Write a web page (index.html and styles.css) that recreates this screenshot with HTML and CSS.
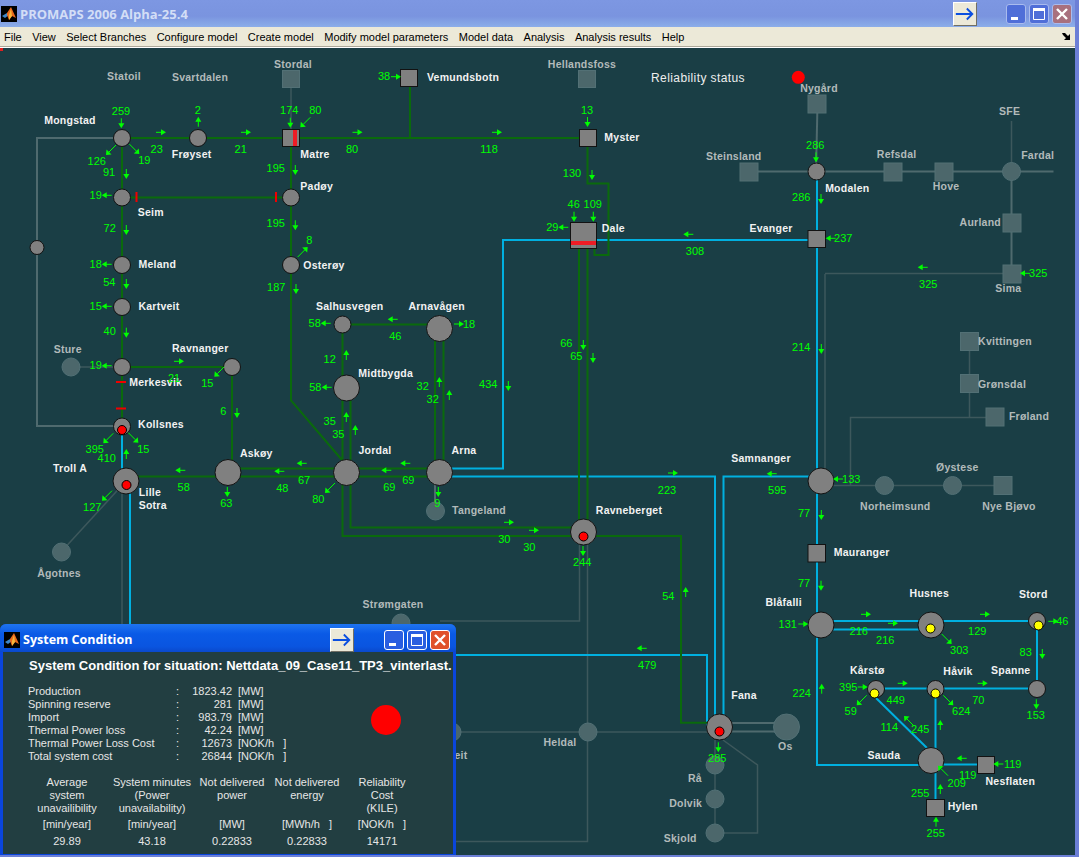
FILE: index.html
```html
<!DOCTYPE html>
<html lang="en">
<head>
    <meta charset="UTF-8">
    <meta name="viewport" content="width=device-width, initial-scale=1.0">
    <title>PROMAPS 2006 Alpha-25.4</title>
    <link rel="stylesheet" href="styles.css">
</head>
<body>
<svg class="defs" width="0" height="0">
    <defs>
        <symbol id="matlab" viewBox="0 0 16 16">
            <rect width="16" height="16" fill="#000"/>
            <path d="M1 10 L6 7 L8 9 L4 12 Z" fill="#3f86c8"/>
            <path d="M6 7 L10 1 L15 12 L11 10 L8 14 L6 9 Z" fill="#e9691c"/>
            <path d="M8 9 L10 3 L11 10 L8 14 Z" fill="#f5b73a"/>
        </symbol>
        <symbol id="go" viewBox="0 0 24 24">
            <path d="M2 12 H20 M14 6 L20 12 L14 18" fill="none" stroke="#0b4fe0" stroke-width="2"/>
        </symbol>
        <symbol id="min" viewBox="0 0 20 20"><rect x="5" y="13" width="7" height="3" fill="#fff"/></symbol>
        <symbol id="max" viewBox="0 0 20 20"><path d="M4.500 5 H15.500 V15.500 H4.500 Z" fill="none" stroke="#fff"/><rect x="4" y="4" width="12" height="3" fill="#fff"/></symbol>
        <symbol id="close" viewBox="0 0 20 20"><path d="M5 5 L15 15 M15 5 L5 15" stroke="#fff" stroke-width="2.400"/></symbol>
    </defs>
</svg>

<div class="app">
    <div class="titlebar">
        <svg class="app-icon"><use href="#matlab"/></svg>
        <span class="app-title">PROMAPS 2006 Alpha-25.4</span>
        <div class="arrow-btn"><svg width="24" height="24"><use href="#go"/></svg></div>
        <div class="win-btn"><svg width="20" height="20"><use href="#min"/></svg></div>
        <div class="win-btn"><svg width="20" height="20"><use href="#max"/></svg></div>
        <div class="win-btn close"><svg width="20" height="20"><use href="#close"/></svg></div>
    </div>

    <div class="menubar">
        <span>File</span>
        <span>View</span>
        <span>Select Branches</span>
        <span>Configure model</span>
        <span>Create model</span>
        <span>Modify model parameters</span>
        <span>Model data</span>
        <span>Analysis</span>
        <span>Analysis results</span>
        <span>Help</span>
        <svg class="menu-more" width="9" height="9" viewBox="0 0 9 9"><path d="M0 1 H3 L6 4 L8 2 V8 H2 L4 6 L1 3 Z" fill="#000"/></svg>
    </div>

    <!-- viewBox starts at y=48 so the numbers below read as page coordinates -->
    <svg class="map" width="1075" height="807" viewBox="0 48 1075 807">
        <defs>
            <g id="r"><path d="M-5 0 H1"/><path class="h" d="M0 -3 L5 0 L0 3 Z"/></g>
            <g id="l"><path d="M5 0 H-1"/><path class="h" d="M0 -3 L-5 0 L0 3 Z"/></g>
            <g id="u"><path d="M0 5 V-1"/><path class="h" d="M-3 0 L0 -5 L3 0 Z"/></g>
            <g id="d"><path d="M0 -5 V1"/><path class="h" d="M-3 0 L0 5 L3 0 Z"/></g>
            <g id="sw"><path d="M5 -5 L-2 2"/><path class="h" d="M-5 5 L-4.500 -0.500 L0.500 4.500 Z"/></g>
            <g id="se"><path d="M-5 -5 L2 2"/><path class="h" d="M5 5 L4.500 -0.500 L-0.500 4.500 Z"/></g>
            <g id="ne"><path d="M-5 5 L2 -2"/><path class="h" d="M5 -5 L4.500 0.500 L-0.500 -4.500 Z"/></g>
            <g id="nw"><path d="M5 5 L-2 -2"/><path class="h" d="M-5 -5 L-4.500 0.500 L0.500 -4.500 Z"/></g>
        </defs>

        <rect class="corner" x="0" y="48" width="3" height="3"/>

        <!-- out of service lines -->
        <g class="off-thick">
            <path d="M122 138 H37 V426 H122"/>
            <path d="M435 472 V510"/>
            <path d="M817.500 104 L816 172"/>
            <path d="M749 171.500 H1053.500"/>
            <path d="M1011.500 172 V274"/>
            <path d="M719 723 H787"/>
            <path d="M719 731.500 H787"/>
        </g>
        <g class="off-thin">
            <path d="M291 79 V130"/>
            <path d="M71 367 H122"/>
            <path d="M126 481 L61 552"/>
            <path d="M122 481 V855"/>
            <path d="M825 274 V470"/>
            <path d="M579.500 532 V621 H440"/>
            <path d="M587.500 532 V841.500 H440"/>
            <path d="M440 732 H719"/>
            <path d="M723 740 L757.500 765 V833 H715"/>
            <path d="M715 740 V833"/>
            <path d="M1011.500 121 V172"/>
            <path d="M1011.500 273.500 H825"/>
            <path d="M969.500 341 V417.500"/>
            <path d="M995 417.500 H850.500 V485.500"/>
            <path d="M821 485.500 H1003"/>
            <path d="M401 625 V640"/>
        </g>

        <!-- 300 kV -->
        <g class="hv">
            <path d="M122 430 V470"/>
            <path d="M130 481 V700"/>
            <path d="M570 240 H503 V468.500 H449"/>
            <path d="M596 240 H808"/>
            <path d="M452 476.500 H715 V720"/>
            <path d="M821 476.500 H723.500 V720"/>
            <path d="M440 655 H707 V727"/>
            <path d="M817 172 V765 H931"/>
            <path d="M821 621 H1037 V689"/>
            <path d="M821 629.500 H931"/>
            <path d="M876 688.500 H1037"/>
            <path d="M935.500 689 V800"/>
            <path d="M876 698 L927 748"/>
            <path d="M931 764.500 H978"/>
        </g>

        <!-- 132 kV -->
        <g class="lv">
            <path d="M122 138 H588"/>
            <path d="M410 86 V138"/>
            <path d="M122 138 V430"/>
            <path d="M122 197.500 H291"/>
            <path d="M291 138 V400.500 L342 460"/>
            <path d="M122 367 H232 V473"/>
            <path d="M126 476.500 H228"/>
            <path d="M228 468.500 H440"/>
            <path d="M228 476.500 H440"/>
            <path d="M342 324.500 H440"/>
            <path d="M342.500 324 V536 H583"/>
            <path d="M350.500 388 V527.500 H583"/>
            <path d="M435 329 V472"/>
            <path d="M443.500 329 V472"/>
            <path d="M583 536 H681 V722.700 H719"/>
            <path d="M587.500 146 V183.500 H608.500 V255 H594.500 V248"/>
            <path d="M579 248 V525"/>
            <path d="M587.500 248 V525"/>
            <path class="stub" d="M177 375 L169 383"/>
        </g>

        <g class="tick">
            <path d="M116 382 H126"/>
            <path d="M116 408.500 H126"/>
            <path d="M136.500 192 V202"/>
            <path d="M276 192 V202"/>
        </g>

        <g class="off-node">
            <circle cx="71" cy="367" r="9"/>
            <circle cx="61.500" cy="552" r="9"/>
            <circle cx="435.500" cy="511" r="9"/>
            <circle cx="452" cy="732" r="9"/>
            <circle cx="401" cy="623" r="9"/>
            <circle cx="588" cy="732" r="9"/>
            <circle cx="786.500" cy="727" r="13"/>
            <circle cx="715" cy="765" r="9"/>
            <circle cx="715" cy="799" r="9"/>
            <circle cx="715" cy="833" r="9"/>
            <circle cx="1011.500" cy="171.500" r="9"/>
            <circle cx="884.500" cy="485.500" r="9"/>
            <circle cx="952.500" cy="485.500" r="9"/>
            <rect x="282.500" y="70.500" width="17" height="17"/>
            <rect x="578.500" y="70.500" width="17" height="17"/>
            <rect x="808" y="95" width="18" height="18"/>
            <rect x="740" y="163" width="18" height="18"/>
            <rect x="884" y="163" width="18" height="18"/>
            <rect x="935" y="163" width="18" height="18"/>
            <rect x="1003" y="214" width="18" height="18"/>
            <rect x="1003" y="265" width="18" height="18"/>
            <rect x="960.500" y="332.500" width="18" height="18"/>
            <rect x="960.500" y="374.500" width="18" height="18"/>
            <rect x="986" y="408" width="18" height="18"/>
            <rect x="994" y="476.500" width="18" height="18"/>
        </g>

        <g class="node">
            <circle cx="37" cy="247.500" r="7"/>
            <circle cx="122" cy="138" r="8.500"/>
            <circle cx="198" cy="138" r="8.500"/>
            <circle cx="122" cy="197.500" r="8.500"/>
            <circle cx="122" cy="265" r="8.500"/>
            <circle cx="122" cy="307" r="8.500"/>
            <circle cx="122" cy="367" r="8.500"/>
            <circle cx="122" cy="426.500" r="8.500"/>
            <circle cx="126" cy="481" r="13"/>
            <circle cx="232" cy="367" r="8.500"/>
            <circle cx="228" cy="472.500" r="13"/>
            <circle cx="291" cy="197.500" r="8.500"/>
            <circle cx="291" cy="265" r="8.500"/>
            <circle cx="342.500" cy="324.500" r="8.500"/>
            <circle cx="439.500" cy="328.500" r="13"/>
            <circle cx="346.500" cy="388" r="13"/>
            <circle cx="346.500" cy="472.500" r="13"/>
            <circle cx="439.500" cy="472.500" r="13"/>
            <circle cx="583.500" cy="532" r="13"/>
            <circle cx="719.500" cy="727" r="13"/>
            <circle cx="816.500" cy="171.500" r="8.500"/>
            <circle cx="821" cy="481" r="13"/>
            <circle cx="821" cy="625" r="13"/>
            <circle cx="931" cy="625" r="13"/>
            <circle cx="1037" cy="621" r="8.500"/>
            <circle cx="876" cy="689" r="8.500"/>
            <circle cx="935.500" cy="689" r="8.500"/>
            <circle cx="1037" cy="689" r="8.500"/>
            <circle cx="931" cy="760.500" r="13"/>
            <rect x="282.500" y="129.500" width="17" height="17"/>
            <rect x="400.500" y="69.500" width="17" height="17"/>
            <rect x="579.500" y="129.500" width="17" height="17"/>
            <rect x="570.500" y="222.500" width="26" height="26"/>
            <rect x="808" y="230.500" width="17.500" height="17"/>
            <rect x="808" y="544.500" width="17.500" height="17.500"/>
            <rect x="977.500" y="756.500" width="17" height="17"/>
            <rect x="926.500" y="799.500" width="18" height="17"/>
        </g>

        <rect class="bar" x="293" y="130" width="4" height="16"/>
        <rect class="bar" x="571" y="241" width="25" height="4"/>

        <g class="alarm">
            <circle cx="122" cy="430" r="4.500"/>
            <circle cx="126.500" cy="485" r="4.500"/>
            <circle cx="583.500" cy="536.500" r="4.500"/>
            <circle cx="719.500" cy="731.500" r="4.500"/>
        </g>
        <g class="warn">
            <circle cx="930.500" cy="628.500" r="4.500"/>
            <circle cx="1038.500" cy="625.500" r="4.500"/>
            <circle cx="874.500" cy="693.500" r="4.500"/>
            <circle cx="935.500" cy="693.500" r="4.500"/>
        </g>
        <circle class="status-dot" cx="798.300" cy="77.300" r="6.500"/>

        <g class="bus-name">
            <text x="70" y="120">Mongstad</text>
            <text x="191.700" y="153.500">Frøyset</text>
            <text x="315" y="153.500">Matre</text>
            <text x="316.700" y="185.700">Padøy</text>
            <text x="150.700" y="212.300">Seim</text>
            <text x="157.300" y="263.500">Meland</text>
            <text x="159" y="306">Kartveit</text>
            <text x="324" y="265">Osterøy</text>
            <text x="200.300" y="347.700">Ravnanger</text>
            <text x="155.700" y="382">Merkesvik</text>
            <text x="161" y="424.300">Kollsnes</text>
            <text x="70" y="467.700">Troll A</text>
            <text x="150" y="492">Lille</text>
            <text x="152.700" y="504.700">Sotra</text>
            <text x="256.300" y="452.700">Askøy</text>
            <text x="629" y="510">Ravneberget</text>
            <text x="349.700" y="306">Salhusvegen</text>
            <text x="436.700" y="306">Arnavågen</text>
            <text x="385.700" y="373.300">Midtbygda</text>
            <text x="375" y="450.300">Jordal</text>
            <text x="464" y="450.300">Arna</text>
            <text x="613.300" y="228">Dale</text>
            <text x="463" y="77">Vemundsbotn</text>
            <text x="622" y="137">Myster</text>
            <text x="847.300" y="187.700">Modalen</text>
            <text x="771" y="227.700">Evanger</text>
            <text x="761" y="458.300">Samnanger</text>
            <text x="861.700" y="552">Mauranger</text>
            <text x="744" y="695">Fana</text>
            <text x="783.700" y="601.700">Blåfalli</text>
            <text x="929.300" y="593.300">Husnes</text>
            <text x="1033.300" y="594">Stord</text>
            <text x="867.300" y="670">Kårstø</text>
            <text x="958" y="671">Håvik</text>
            <text x="1010.700" y="670">Spanne</text>
            <text x="884" y="755.300">Sauda</text>
            <text x="1010.300" y="781">Nesflaten</text>
            <text x="962.700" y="806">Hylen</text>
        </g>
        <g class="bus-name dim">
            <text x="124" y="76">Statoil</text>
            <text x="200" y="77">Svartdalen</text>
            <text x="293" y="64">Stordal</text>
            <text x="582" y="64">Hellandsfoss</text>
            <text x="67.700" y="349.300">Sture</text>
            <text x="59" y="572.700">Ågotnes</text>
            <text x="393" y="604">Strømgaten</text>
            <text x="479" y="510">Tangeland</text>
            <text x="560" y="742">Heldal</text>
            <text x="695" y="778">Rå</text>
            <text x="685.700" y="803">Dolvik</text>
            <text x="680.300" y="838.300">Skjold</text>
            <text x="785.300" y="746">Os</text>
            <text x="461" y="755">eit</text>
            <text x="819" y="88">Nygård</text>
            <text x="733.700" y="155.700">Steinsland</text>
            <text x="896.700" y="154">Refsdal</text>
            <text x="946" y="186">Hove</text>
            <text x="1009.700" y="110.700">SFE</text>
            <text x="1037.700" y="154.700">Fardal</text>
            <text x="980.300" y="222">Aurland</text>
            <text x="1008.300" y="288.300">Sima</text>
            <text x="1005" y="340.700">Kvittingen</text>
            <text x="1002" y="384">Grønsdal</text>
            <text x="1029" y="415.700">Frøland</text>
            <text x="895.300" y="506.300">Norheimsund</text>
            <text x="957.300" y="467.300">Øystese</text>
            <text x="1009" y="506.300">Nye Bjøvo</text>
        </g>
        <text class="status-label" x="698" y="78">Reliability status</text>

        <g class="flow">
            <text x="121" y="111">259</text><text x="197.700" y="110">2</text>
            <text x="289.300" y="110">174</text><text x="315.300" y="110">80</text>
            <text x="96.700" y="161">126</text><text x="144.300" y="160">19</text>
            <text x="156.700" y="149">23</text><text x="240.700" y="149">21</text>
            <text x="352" y="149">80</text><text x="489" y="149">118</text>
            <text x="384" y="76">38</text><text x="587" y="110">13</text>
            <text x="572" y="173">130</text>
            <text x="109" y="172.300">91</text><text x="95.700" y="195.300">19</text>
            <text x="275.700" y="168.300">195</text><text x="109.700" y="228">72</text>
            <text x="275.700" y="223.300">195</text><text x="309.300" y="240">8</text>
            <text x="95.700" y="264">18</text><text x="109.300" y="282">54</text>
            <text x="95.700" y="306.300">15</text><text x="109.700" y="331">40</text>
            <text x="276.300" y="287.300">187</text>
            <text x="573.700" y="204">46</text><text x="592.700" y="204">109</text>
            <text x="552.300" y="227.300">29</text><text x="695" y="251">308</text>
            <text x="95.700" y="365">19</text><text x="174" y="378">21</text>
            <text x="207.300" y="383">15</text><text x="94.700" y="449.300">395</text>
            <text x="143.300" y="449.300">15</text><text x="106.700" y="458">410</text>
            <text x="183.700" y="487.300">58</text><text x="282.300" y="488.300">48</text>
            <text x="226.300" y="503.300">63</text><text x="223.300" y="411">6</text>
            <text x="92.300" y="507">127</text>
            <text x="314.700" y="323">58</text><text x="395.300" y="336">46</text>
            <text x="469" y="324">18</text><text x="329.700" y="359">12</text>
            <text x="315.300" y="387">58</text><text x="329.700" y="421">35</text>
            <text x="338.300" y="434">35</text><text x="422.700" y="386">32</text>
            <text x="432.700" y="399">32</text><text x="488.300" y="384">434</text>
            <text x="566.300" y="343">66</text><text x="576.300" y="356">65</text>
            <text x="304" y="480">67</text><text x="389.300" y="487">69</text>
            <text x="408.300" y="480">69</text><text x="318.300" y="499">80</text>
            <text x="437.300" y="503">9</text><text x="504.300" y="539">30</text>
            <text x="529.300" y="547">30</text><text x="582.300" y="562">244</text>
            <text x="667" y="490">223</text><text x="777.300" y="490">595</text>
            <text x="668.300" y="596">54</text><text x="647.300" y="665">479</text>
            <text x="717.300" y="758">285</text><text x="787.700" y="624">131</text>
            <text x="801.700" y="693.300">224</text><text x="804" y="513">77</text>
            <text x="804" y="583">77</text><text x="801.300" y="347">214</text>
            <text x="851.300" y="479">133</text><text x="815.300" y="145">286</text>
            <text x="801.300" y="197">286</text><text x="843.300" y="237.700">237</text>
            <text x="1038.300" y="273.300">325</text><text x="928.300" y="284">325</text>
            <text x="858.700" y="631">216</text><text x="885.300" y="640">216</text>
            <text x="959.300" y="650">303</text><text x="977.300" y="631">129</text>
            <text x="1062.300" y="621.300">46</text><text x="1025.700" y="652">83</text>
            <text x="848.300" y="687">395</text><text x="850.700" y="711">59</text>
            <text x="895.700" y="700">449</text><text x="978.300" y="700">70</text>
            <text x="961.300" y="711">624</text><text x="1035.700" y="715">153</text>
            <text x="920.300" y="729">245</text><text x="889.300" y="727">114</text>
            <text x="967.700" y="775">119</text><text x="1012.700" y="764">119</text>
            <text x="956.700" y="783">209</text><text x="920.300" y="793">255</text>
            <text x="935.700" y="833.300">255</text>
        </g>

        <g class="arrows">
            <use href="#d" x="121.300" y="123.300"/><use href="#sw" x="111" y="150"/>
            <use href="#se" x="134.300" y="149"/><use href="#r" x="161" y="132.300"/>
            <use href="#u" x="198.300" y="121.700"/><use href="#r" x="246" y="132.300"/>
            <use href="#d" x="290.300" y="122.700"/><use href="#sw" x="305.300" y="122.300"/>
            <use href="#r" x="357.500" y="132.300"/><use href="#r" x="497" y="132.300"/>
            <use href="#r" x="396" y="76.700"/><use href="#d" x="587.500" y="122"/>
            <use href="#d" x="592" y="175"/>
            <use href="#d" x="126.300" y="174"/><use href="#l" x="106.700" y="195.300"/>
            <use href="#d" x="295.300" y="170"/><use href="#d" x="126.300" y="230"/>
            <use href="#d" x="295.300" y="225.300"/><use href="#ne" x="302.700" y="252"/>
            <use href="#l" x="106.700" y="264.300"/><use href="#d" x="126.300" y="284"/>
            <use href="#l" x="106.700" y="306.300"/><use href="#d" x="126.300" y="332.700"/>
            <use href="#d" x="296" y="289"/>
            <use href="#d" x="574" y="216.700"/><use href="#d" x="593.300" y="216.700"/>
            <use href="#l" x="563.300" y="227.300"/><use href="#l" x="688.300" y="234.300"/>
            <use href="#l" x="106.700" y="365.700"/><use href="#r" x="179" y="361.300"/>
            <use href="#sw" x="219.300" y="371.700"/><use href="#sw" x="108.300" y="438.300"/>
            <use href="#se" x="133.300" y="437.700"/><use href="#u" x="126.300" y="454"/>
            <use href="#l" x="180.300" y="470.300"/><use href="#l" x="279.300" y="471.300"/>
            <use href="#d" x="227.300" y="492"/><use href="#d" x="237" y="413"/>
            <use href="#sw" x="107" y="495.700"/>
            <use href="#l" x="325.700" y="323.300"/><use href="#l" x="392.700" y="319.300"/>
            <use href="#r" x="459" y="324"/><use href="#u" x="346.300" y="355"/>
            <use href="#l" x="326.700" y="387.300"/><use href="#u" x="346.300" y="417"/>
            <use href="#u" x="355.300" y="430"/><use href="#u" x="439.300" y="382"/>
            <use href="#u" x="449.300" y="395"/><use href="#d" x="508.300" y="386"/>
            <use href="#d" x="583.300" y="345"/><use href="#d" x="593" y="358"/>
            <use href="#l" x="301.700" y="463.300"/><use href="#l" x="386.300" y="470.300"/>
            <use href="#l" x="405.300" y="463.300"/><use href="#sw" x="330" y="488"/>
            <use href="#d" x="438.300" y="492"/><use href="#r" x="509" y="522.300"/>
            <use href="#r" x="534" y="530.300"/><use href="#d" x="583" y="551"/>
            <use href="#r" x="673" y="473"/><use href="#l" x="771.700" y="473.700"/>
            <use href="#u" x="685.700" y="592"/><use href="#l" x="641.700" y="648.300"/>
            <use href="#d" x="718.300" y="747.300"/><use href="#r" x="803.300" y="624"/>
            <use href="#u" x="821.700" y="688.700"/><use href="#d" x="821.300" y="515"/>
            <use href="#d" x="821" y="585.700"/><use href="#d" x="821.300" y="349"/>
            <use href="#l" x="838" y="479"/><use href="#d" x="816" y="157.300"/>
            <use href="#d" x="821" y="199"/><use href="#l" x="830.700" y="238.300"/>
            <use href="#l" x="1025" y="273.300"/><use href="#l" x="922.700" y="267.300"/>
            <use href="#r" x="866" y="614.300"/><use href="#r" x="893" y="623.300"/>
            <use href="#se" x="946.700" y="639"/><use href="#r" x="985" y="614.300"/>
            <use href="#r" x="1053.300" y="621.300"/><use href="#d" x="1042.300" y="654"/>
            <use href="#r" x="862.700" y="687"/><use href="#sw" x="861.700" y="700.300"/>
            <use href="#r" x="902.700" y="683.300"/><use href="#r" x="982.700" y="683.300"/>
            <use href="#se" x="948.300" y="700.300"/><use href="#d" x="1036.300" y="704.300"/>
            <use href="#u" x="940.300" y="725"/><use href="#nw" x="909" y="721"/>
            <use href="#l" x="961.700" y="758.300"/><use href="#l" x="998.300" y="764"/>
            <use href="#nw" x="943" y="770.700"/><use href="#u" x="940.300" y="789"/>
            <use href="#u" x="936" y="821.700"/>
        </g>
    </svg>

    <div class="dialog">
        <div class="dialog-bar">
            <svg class="dialog-icon"><use href="#matlab"/></svg>
            <span class="dialog-title">System Condition</span>
            <div class="arrow-btn small"><svg width="24" height="24"><use href="#go"/></svg></div>
            <div class="win-btn active"><svg width="20" height="20"><use href="#min"/></svg></div>
            <div class="win-btn active"><svg width="20" height="20"><use href="#max"/></svg></div>
            <div class="win-btn active close"><svg width="20" height="20"><use href="#close"/></svg></div>
        </div>
        <div class="dialog-body">
            <h1 class="dialog-heading">System Condition for situation: Nettdata_09_Case11_TP3_vinterlast.</h1>
            <div class="summary">
                <span>Production</span><span>:</span><span class="num">1823.42</span><span>[MW]</span>
                <span>Spinning reserve</span><span>:</span><span class="num">281</span><span>[MW]</span>
                <span>Import</span><span>:</span><span class="num">983.79</span><span>[MW]</span>
                <span>Thermal Power loss</span><span>:</span><span class="num">42.24</span><span>[MW]</span>
                <span>Thermal Power Loss Cost</span><span>:</span><span class="num">12673</span><span>[NOK/h &nbsp; ]</span>
                <span>Total system cost</span><span>:</span><span class="num">26844</span><span>[NOK/h &nbsp; ]</span>
            </div>
            <div class="status-big"></div>
            <div class="indices">
                <div class="index">
                    <p class="index-name">Average<br>system<br>unavailibility</p>
                    <p class="index-unit">[min/year]</p>
                    <p class="index-value">29.89</p>
                </div>
                <div class="index">
                    <p class="index-name">System minutes<br>(Power<br>unavailability)</p>
                    <p class="index-unit">[min/year]</p>
                    <p class="index-value">43.18</p>
                </div>
                <div class="index">
                    <p class="index-name">Not delivered<br>power</p>
                    <p class="index-unit">[MW]</p>
                    <p class="index-value">0.22833</p>
                </div>
                <div class="index">
                    <p class="index-name">Not delivered<br>energy</p>
                    <p class="index-unit">[MWh/h &nbsp; ]</p>
                    <p class="index-value">0.22833</p>
                </div>
                <div class="index">
                    <p class="index-name">Reliability<br>Cost<br>(KILE)</p>
                    <p class="index-unit">[NOK/h &nbsp; ]</p>
                    <p class="index-value">14171</p>
                </div>
            </div>
        </div>
    </div>
</div>
</body>
</html>
```
FILE: styles.css
```css
body {
    margin: 0;
    font-family: "Liberation Sans", Arial, sans-serif;
}

.defs {
    position: absolute;
}

.app {
    position: relative;
    width: 1075px;
    height: 855px;
    border-right: 4px solid #6c7fd6;
    border-bottom: 2px solid #6c7fd6;
    overflow: hidden;
    background-color: #1a3e45;
}

/* title bar */
.titlebar {
    display: flex;
    align-items: center;
    height: 27px;
    padding-right: 3px;
    background: linear-gradient(#7d97e2 0, #7a94df 60%, #8caee9 100%);
}

.app-icon {
    width: 16px;
    height: 16px;
    margin-left: 1px;
}

.app-title {
    margin-left: 3px;
    font-family: "Open Sans", sans-serif;
    font-size: 13px;
    font-weight: bold;
    color: #d3def6;
    flex: 1;
}

.arrow-btn {
    display: flex;
    align-items: center;
    justify-content: center;
    width: 24px;
    height: 24px;
    margin-right: 26px;
    background-color: #ece9d8;
    border: 1px solid;
    border-color: #fff #716f64 #716f64 #fff;
    box-sizing: border-box;
}

.arrow-btn.small {
    margin-right: 27px;
}

.win-btn {
    display: flex;
    width: 20px;
    height: 20px;
    margin-left: 3px;
    border: 1px solid #a9bbee;
    border-radius: 3px;
    background-color: #4f6ed8;
    box-sizing: border-box;
}

.win-btn svg {
    margin: -1px;
}

.win-btn.close {
    background-color: #a8707e;
}

.win-btn.active {
    background-color: #2a5ee0;
    border-color: #fff;
}

.win-btn.active.close {
    background-color: #e0512a;
}

/* menu */
.menubar {
    display: flex;
    align-items: center;
    gap: 10.400px;
    height: 19px;
    padding-left: 4px;
    background-color: #ece9d8;
    border-bottom: 1px solid #aca899;
    font-size: 11px;
    color: #000;
    box-shadow: 0 1px 0 #fff;
}

.menu-more {
    margin-left: auto;
    margin-right: 4px;
}

/* network map */
.map {
    display: block;
    margin-top: 1px;
}

.map g {
    fill: none;
}

.corner {
    fill: #e02020;
}

.off-thick path {
    stroke: #4f6a6e;
    stroke-width: 2;
}

.off-thin path {
    stroke: #3d585c;
    stroke-width: 1.500;
}

.hv path {
    stroke: #00b0e0;
    stroke-width: 2;
}

.lv path {
    stroke: #0a6a0c;
    stroke-width: 2;
}

.lv .stub {
    stroke-width: 1;
}

.tick path {
    stroke: #f00000;
    stroke-width: 2;
}

.node circle, .node rect {
    fill: #808080;
    stroke: #121212;
    stroke-width: 1;
}

.off-node circle, .off-node rect {
    fill: #4c676b;
    stroke: #527075;
    stroke-width: 1;
}

.bar {
    fill: #ee1c25;
}

.alarm circle {
    fill: #ff0000;
    stroke: #000;
}

.warn circle {
    fill: #ffff00;
    stroke: #000;
}

.status-dot {
    fill: #ff0000;
}

.bus-name text {
    fill: #f2f2f2;
    font-size: 10.500px;
    font-weight: bold;
    letter-spacing: 0.250px;
    text-anchor: middle;
    dominant-baseline: central;
}

.bus-name.dim text {
    fill: #b2baba;
}

.status-label {
    fill: #eeeeee;
    font-size: 12px;
    letter-spacing: 0.400px;
    text-anchor: middle;
    dominant-baseline: central;
}

.flow text {
    fill: #00ff00;
    font-size: 11px;
    text-anchor: middle;
    dominant-baseline: central;
}

.arrows use {
    stroke: #00ff00;
    stroke-width: 1;
}

.h {
    fill: #00ff00;
    stroke: none;
}

/* floating dialog */
.dialog {
    position: absolute;
    left: 0;
    bottom: -2px;
    width: 456px;
    height: 233px;
    display: flex;
    flex-direction: column;
    padding: 0 3px 3px;
    border-radius: 6px 6px 0 0;
    background-color: #0a45dc;
    box-sizing: border-box;
}

.dialog-bar {
    display: flex;
    align-items: center;
    height: 28px;
    flex-shrink: 0;
    background: linear-gradient(#1f74f0 0, #0a5ae6 35%, #0a55e0 80%, #0a49cc 100%);
    margin: 0 -3px;
    padding: 3px 6px 0 4px;
    box-sizing: border-box;
    border-radius: 6px 6px 0 0;
}

.dialog-icon {
    width: 16px;
    height: 16px;
}

.dialog-title {
    flex: 1;
    margin-left: 3px;
    font-family: "Open Sans", sans-serif;
    font-size: 12.500px;
    font-weight: bold;
    color: #fff;
}

.dialog-body {
    position: relative;
    flex: 1;
    padding: 7px 0 0 25px;
    background-color: #223e41;
    color: #e6e6e6;
    font-size: 11px;
    overflow: hidden;
}

.dialog-heading {
    margin: 0 0 12px 1px;
    font-size: 13px;
    line-height: 14px;
    font-weight: bold;
    white-space: nowrap;
    color: #fff;
}

.summary {
    display: grid;
    grid-template-columns: 148px 14px 42px auto;
    justify-content: start;
    grid-auto-rows: 13px;
    line-height: 13px;
}

.num {
    text-align: right;
}

.summary span:nth-child(4n) {
    margin-left: 6px;
}

.status-big {
    position: absolute;
    left: 368px;
    top: 53px;
    width: 30px;
    height: 30px;
    border-radius: 50%;
    background-color: #ff0000;
}

.indices {
    display: grid;
    grid-template-columns: 78px 92px 68px 82px 68px;
    margin-top: 13px;
}

.index {
    text-align: center;
}

.index p {
    margin: 0;
    line-height: 13px;
}

.index-name {
    height: 39px;
}

.index-unit {
    margin-top: 3px !important;
}

.index-value {
    margin-top: 4px !important;
}
```
